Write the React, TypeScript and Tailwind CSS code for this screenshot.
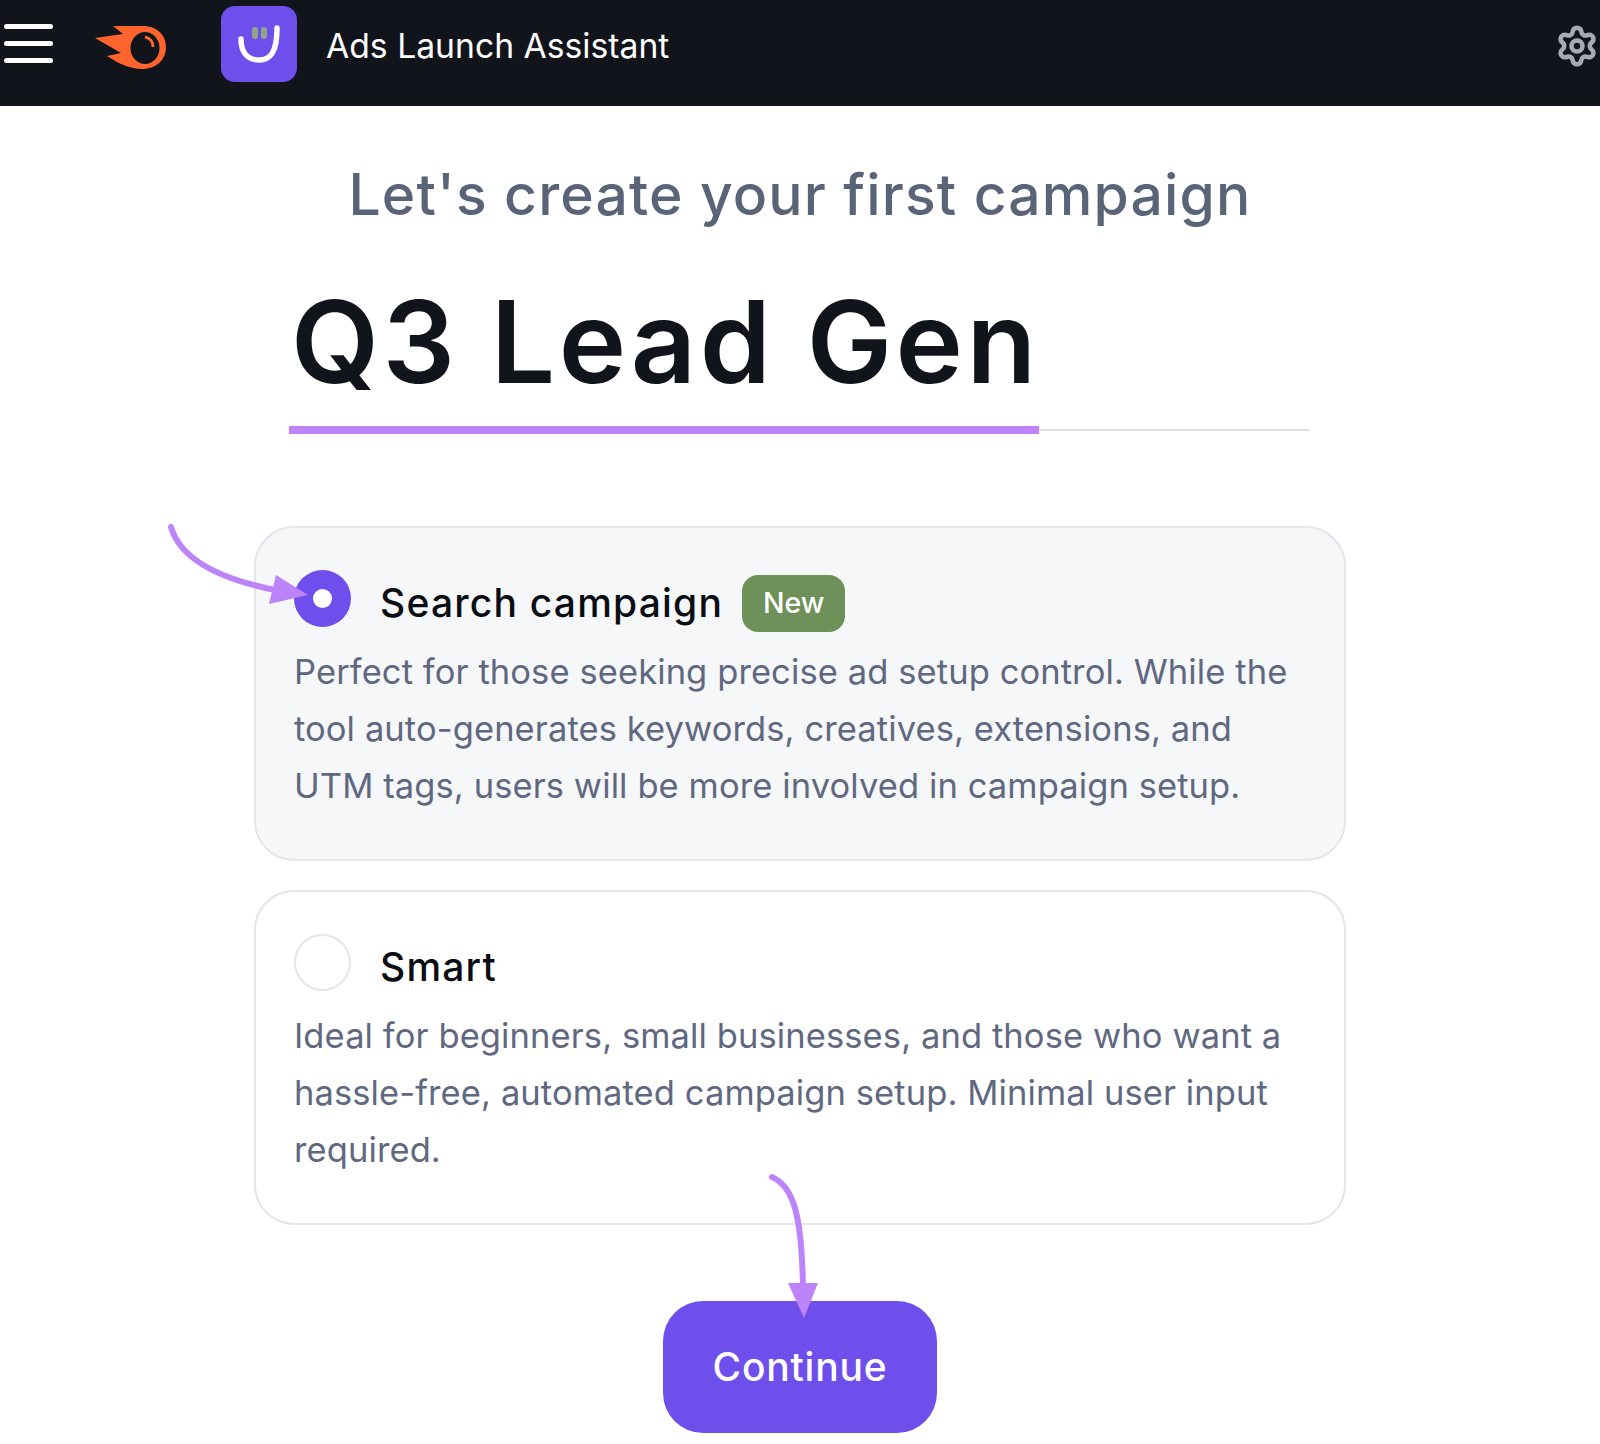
import React, { FC } from 'react';
import { Settings } from 'lucide-react';

const poppins = { fontFamily: 'Inter, sans-serif' };

const SemrushLogo: FC = () => (
  <svg width="71" height="43" viewBox="0 0 71 43">
    <path
      d="M18 0 L48 0 C62 0 71 9 71 21 C71 34 61 43 47 43 C36 43 24 38 12 30 L26 27 L0 12 L28 8 Z"
      fill="#ff642d"
    />
    <ellipse cx="50" cy="22" rx="14.5" ry="16" fill="#12141c" />
    <path d="M50 11 C55 12 58 16 58 21" fill="none" stroke="#ff642d" strokeWidth="3" />
  </svg>
);

const AppLogo: FC = () => (
  <div className="flex h-[76px] w-[76px] items-center justify-center rounded-[14px] bg-[#6f4fec]">
    <svg width="76" height="76" viewBox="0 0 76 76">
      <rect x="31" y="21" width="6" height="12" rx="3" fill="#8fa58a" />
      <rect x="40" y="21" width="6" height="12" rx="3" fill="#8fa58a" />
      <path
        d="M20 33 C20 47 27 54 38 54 C49 54 56 47 56 22"
        fill="none"
        stroke="#fff"
        strokeWidth="5.5"
        strokeLinecap="round"
      />
    </svg>
  </div>
);

const Header: FC = () => (
  <header className="flex h-[106px] shrink-0 items-center bg-[#12141c] pl-1 pr-px">
    <div className="flex w-[49px] flex-col gap-3 self-start pt-6">
      <span className="h-[5px] rounded-full bg-white" />
      <span className="h-[5px] rounded-full bg-white" />
      <span className="h-[5px] rounded-full bg-white" />
    </div>
    <div className="ml-[42px] mb-[11px]">
      <SemrushLogo />
    </div>
    <div className="ml-[55px] mb-[18px]">
      <AppLogo />
    </div>
    <div className="ml-[29px] mb-[14px] font-['Inter'] text-[33.7px] text-white">Ads Launch Assistant</div>
    <Settings className="mb-[14px] ml-auto h-[44px] w-[44px] text-[#a7aab2]" strokeWidth={2.5} />
  </header>
);

interface OptionProps {
  title: string;
  description: string;
  selected?: boolean;
  badge?: string;
}

const Option: FC<OptionProps> = ({ title, description, selected, badge }) => (
  <div
    className={`h-[335px] w-[1092px] rounded-[40px] border-2 border-[#e3e5eb] pl-[38px] pr-[50px] pt-[42px] ${
      selected ? 'bg-[#f6f7f9]' : 'bg-white'
    }`}
  >
    <div className="flex h-[57px] items-center">
      {selected ? (
        <span className="flex h-[57px] w-[57px] items-center justify-center rounded-full bg-[#6f4fec]">
          <span className="h-[19px] w-[19px] rounded-full bg-white" />
        </span>
      ) : (
        <span className="h-[57px] w-[57px] rounded-full border-2 border-[#e3e5eb] bg-white" />
      )}
      <span
        className="ml-[29px] pt-[9px] text-[39px] font-medium tracking-[1.2px] text-[#0b0d14]"
        style={poppins}
      >
        {title}
      </span>
      {badge && (
        <span
          className="ml-[19px] mt-[10px] flex h-[57px] w-[103px] items-center justify-center rounded-2xl bg-[#6e9159] text-[28.5px] font-medium text-white"
          style={poppins}
        >
          {badge}
        </span>
      )}
    </div>
    <p className="mt-4 text-[34.5px] leading-[57px] tracking-[0.1px] text-[#5f6880]" style={poppins}>
      {description}
    </p>
  </div>
);

const Arrows: FC = () => (
  <svg className="pointer-events-none absolute left-0 top-0" width="1600" height="1444" viewBox="0 0 1600 1444">
    <path d="M171 527 C180 558 215 578 275 590" fill="none" stroke="#bd83fb" strokeWidth="6" strokeLinecap="round" />
    <path d="M276 575 L308 595 L269 604 Z" fill="#bd83fb" />
    <path d="M772 1177 C792 1186 802 1210 803 1290" fill="none" stroke="#bd83fb" strokeWidth="6" strokeLinecap="round" />
    <path d="M788 1283 L818 1283 L804 1318 Z" fill="#bd83fb" />
  </svg>
);

export default function App() {
  return (
    <div className="relative flex h-[1444px] w-[1600px] flex-col overflow-hidden bg-white">
      <Header />
      <main className="flex flex-col items-center">
        <h1
          className="mt-[49px] text-[57px] font-medium leading-[80px] tracking-[1.15px] text-[#5a6478]"
          style={poppins}
        >
          Let's create your first campaign
        </h1>
        <div className="mr-px mt-[42px] w-[1021px]">
          <div
            className="pl-[2px] text-[114px] font-semibold leading-[130px] tracking-[3.5px] text-[#12141c]"
            style={poppins}
          >
            Q3 Lead Gen
          </div>
          <div className="mt-[19px] flex items-center">
            <span className="h-2 w-[750px] bg-[#bd83fb]" />
            <span className="h-0.5 flex-1 bg-[#dcdee3]" />
          </div>
        </div>
        <div className="mt-[92px] flex flex-col gap-[29px]">
          <Option
            selected
            title="Search campaign"
            badge="New"
            description="Perfect for those seeking precise ad setup control. While the tool auto-generates keywords, creatives, extensions, and UTM tags, users will be more involved in campaign setup."
          />
          <Option
            title="Smart"
            description="Ideal for beginners, small businesses, and those who want a hassle-free, automated campaign setup. Minimal user input required."
          />
        </div>
        <button
          className="mt-[76px] h-[132px] w-[274px] rounded-[40px] bg-[#6f4fec] text-[39px] font-medium tracking-[0.8px] text-white"
          style={poppins}
        >
          Continue
        </button>
      </main>
      <Arrows />
    </div>
  );
}
